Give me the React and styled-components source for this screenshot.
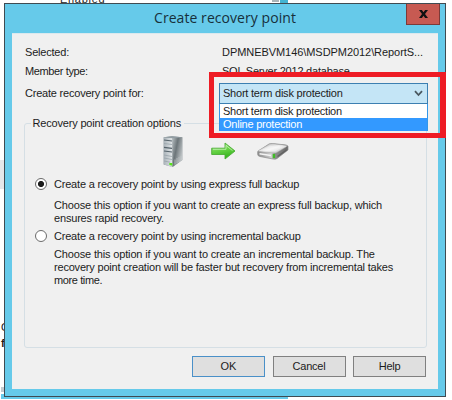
import React from "react";
import styled, { createGlobalStyle } from "styled-components";

const GlobalStyle = createGlobalStyle`
  *, *::before, *::after { box-sizing: border-box; }
  body { margin: 0; background: #fff; }
`;

const Desktop = styled.main`
  position: relative;
  width: 452px;
  height: 400px;
  padding: 3px 0 0 4px;
  overflow: hidden;
  background: #fff;
  font: 11px/13px "Liberation Sans", Arial, sans-serif;
  color: #1c1c1c;
`;

/* Slivers of the window that lies behind the dialog */
const Behind = styled.div`
  position: absolute;
  left: ${(p) => p.$x}px;
  top: ${(p) => p.$y}px;
  width: ${(p) => p.$w}px;
  height: ${(p) => p.$h}px;
  background: ${(p) => p.$bg || "transparent"};
`;
const BehindLabel = styled.span`
  display: block;
  line-height: 13px;
  letter-spacing: ${(p) => p.$ls || 0}px;
  font-weight: ${(p) => p.$weight || 400};
`;

const Dialog = styled.section`
  position: relative;
  display: flex;
  flex-direction: column;
  width: 442px;
  height: 394px;
  padding: 0 7px 7px;
  border: 1px solid #3f4b52;
  background: #66caea;
`;

const TitleBar = styled.header`
  position: relative;
  flex: none;
  height: 29px;
  display: flex;
  justify-content: center;
`;
const Title = styled.h1`
  margin: 0;
  padding-top: 4px;
  font: 400 14px/20px "Open Sans", "Noto Sans", sans-serif;
  letter-spacing: 0.06px;
  color: #17303b;
`;
const CloseButton = styled.button`
  position: absolute;
  right: -2px;
  top: 0;
  width: 34px;
  height: 21px;
  padding: 0;
  display: flex;
  align-items: center;
  justify-content: center;
  border: 1px solid #7c3a38;
  border-top: 0;
  background: #c75a52;
`;

const Client = styled.div`
  flex: 1;
  padding: 12px 11px 0 12px;
  background: #f0f0f0;
  border-top: 1px solid #dbe9ee;
  display: flex;
  flex-direction: column;
`;

const Field = styled.div`
  display: grid;
  grid-template-columns: 197px 1fr;
  height: ${(p) => p.$h}px;
  padding-left: 1px;
`;
const Text = styled.span`
  display: block;
  white-space: nowrap;
  letter-spacing: ${(p) => p.$ls}px;
`;

const Select = styled.div`
  display: flex;
  align-items: center;
  justify-content: space-between;
  width: 209px;
  height: 21px;
  margin: -4px 0 0 -3px;
  padding: 0 4px 0 3px;
  border: 1px solid #3c7fb1;
  background: #c4e5f6;
`;
const Menu = styled.ul`
  position: absolute;
  left: 214px;
  top: 100px;
  width: 209px;
  height: 27px;
  margin: 0;
  padding: 1px 0 0;
  list-style: none;
  border: solid #3397e8;
  border-width: 0 1px;
  background: #fff;
`;
const Option = styled.li`
  height: 13px;
  padding-left: 3px;
  background: ${(p) => (p.$active ? "#3399ff" : "#fff")};
  color: ${(p) => (p.$active ? "#fff" : "#1c1c1c")};
`;
const Highlight = styled.div`
  position: absolute;
  left: 204px;
  top: 68px;
  width: 237px;
  height: 66px;
  border: 5px solid #ee1c25;
  border-right-width: 6px;
`;

const Group = styled.fieldset`
  height: 231px;
  min-width: 0;
  margin: 0;
  padding: 0 10px;
  border: 1px solid #d5dfe5;
  border-radius: 3px;
`;
const Legend = styled.legend`
  margin-left: -4.5px;
  padding: 0 3px 0 2px;
  letter-spacing: -0.18px;
`;
const Icons = styled.div`
  display: flex;
  height: 48px;
  padding-left: 128px;
  align-items: flex-start;
`;
const ServerIcon = styled.svg`
  flex: none;
  margin-top: 6px;
`;
const ArrowIcon = styled.svg`
  flex: none;
  margin: 12px 0 0 27px;
`;
const DriveIcon = styled.svg`
  flex: none;
  margin: 13px 0 0 21px;
`;

const Choice = styled.label`
  display: flex;
  align-items: flex-start;
  height: ${(p) => p.$h}px;
`;
const Radio = styled.span`
  flex: none;
  width: 12px;
  height: 12px;
  margin: -0.5px 7px 0 0;
  border: 1px solid #6b6b6b;
  border-radius: 50%;
  background: ${(p) => (p.$on ? "radial-gradient(circle, #1d1d1d 0 2.7px, #fff 3.4px)" : "#fff")};
`;
const Description = styled.div`
  height: ${(p) => p.$h}px;
  padding-left: 19px;
`;

const Footer = styled.footer`
  display: flex;
  justify-content: flex-end;
  gap: 7.5px;
  margin-top: 8px;
  padding-right: 1px;
`;
const Button = styled.button`
  width: 73px;
  height: 21px;
  padding: 0;
  border: 1px solid ${(p) => (p.$primary ? "#4a90c8" : "#808080")};
  background: #dfdfdf;
  font: inherit;
  letter-spacing: ${(p) => p.$ls}px;
  color: #1c1c1c;
`;

const Server = () => (
  <ServerIcon width="21" height="32" viewBox="0 0 21 32">
    <defs>
      <linearGradient id="srvSide" x1="0" y1="0" x2="1" y2="0.6">
        <stop offset="0" stopColor="#b4bcbf" />
        <stop offset="0.45" stopColor="#6c7579" />
        <stop offset="1" stopColor="#c3c8ca" />
      </linearGradient>
      <linearGradient id="srvFront" x1="0" y1="0" x2="1" y2="0">
        <stop offset="0" stopColor="#aab3b9" />
        <stop offset="1" stopColor="#e4e8ea" />
      </linearGradient>
    </defs>
    <path d="M.7 1.200 9 .3 19.300 1.200V24L9.500 31 .7 28.500z" fill="#8a9499" />
    <path d="M.7 1.300 9.500 2V31L.7 28.500z" fill="url(#srvFront)" />
    <path d="M9.500 2 19.300 1.200V24L9.500 31z" fill="url(#srvSide)" />
    <path d="M.7 1.200 9 .3 19.300 1.200 9.500 2.200z" fill="#929da3" />
    <path d="M1 4 9 5M1 11.300 9 12.300M1 15 9 16" stroke="#56636b" strokeWidth="1.200" />
    <path d="M1 7.500 9 8.500M1 19 9 20.500M1 22 9 23.500M1 25 7 26.200" stroke="#98a3a9" strokeWidth=".8" />
    <path d="M6.300 27h3v2.800L6.300 29z" fill="#58e31b" />
    <path d="M12 23.500v5M14 22v5M16 21v5M18 20v4" stroke="#c3c8ca" strokeWidth=".7" />
  </ServerIcon>
);

const Arrow = () => (
  <ArrowIcon width="25" height="19" viewBox="0 0 25 19">
    <defs>
      <linearGradient id="arrowFill" x1="0" y1="0" x2="0.300" y2="1">
        <stop offset="0" stopColor="#b5eba0" />
        <stop offset="0.500" stopColor="#69d447" />
        <stop offset="1" stopColor="#35b51c" />
      </linearGradient>
    </defs>
    <path d="M.7 6.200H14V1L24 9 14 17V12.500H.7z" fill="url(#arrowFill)" stroke="#4cae35" strokeWidth=".9" strokeLinejoin="round" />
    <path d="M2 7.300H15V3.400L21.500 8.600" fill="none" stroke="#c5f2b5" strokeWidth=".8" />
  </ArrowIcon>
);

const Drive = () => (
  <DriveIcon width="32" height="18" viewBox="0 0 32 18">
    <defs>
      <linearGradient id="driveTop" x1="0" y1="0" x2="1" y2="1">
        <stop offset="0" stopColor="#b8b8b8" />
        <stop offset="0.500" stopColor="#f2f2f2" />
        <stop offset="1" stopColor="#b4b4b4" />
      </linearGradient>
      <linearGradient id="driveFront" x1="0" y1="0" x2="1" y2="0">
        <stop offset="0" stopColor="#8c8c8c" />
        <stop offset="0.450" stopColor="#d0d0d0" />
        <stop offset="0.600" stopColor="#8a8a8a" />
        <stop offset="1" stopColor="#6a6a6a" />
      </linearGradient>
    </defs>
    <path d="M.7 8.500 12 1Q13 .5 15 .5L29 2Q31 2.500 31 3.500V7L20 15.500Q19 16.500 16 16L3 13.500Q.7 13 .7 11.500z" fill="url(#driveFront)" stroke="#8a8a8a" strokeWidth=".7" />
    <path d="M1.500 7.500 12.500 1.200Q14 .7 16 .8L29.500 2.500Q30.500 3 29 4L19.500 9.700Q18.500 10.200 17 10L3 8.500Q1 8.300 1.500 7.500z" fill="url(#driveTop)" stroke="#a2a2a2" strokeWidth=".5" />
    <path d="M5 7 13 2.700 26 4 18 8.600z" fill="#fff" opacity=".4" />
    <path d="M2.500 10.700 14 12.500" stroke="#f3f3f3" strokeWidth="1.500" />
    <path d="M15.700 11 18.200 10.700V15L15.700 15.300z" fill="#3fbb24" />
    <path d="M20.500 13.500 29.500 7" stroke="#626262" strokeWidth="1.500" />
  </DriveIcon>
);

export default function App() {
  return (
    <>
      <GlobalStyle />
      <Desktop>
        <Behind $x={60} $y={-7} $w={48} $h={13}><BehindLabel $ls={0.7}>Enabled</BehindLabel></Behind>
        <Behind $x={272} $y={0} $w={7} $h={2} $bg="#a9b4b8" />
        <Behind $x={280} $y={0} $w={8} $h={3} $bg="#43b4d2" />
        <Behind $x={0} $y={160} $w={4} $h={29} $bg="#e4e7ea" />
        <Behind $x={1} $y={321} $w={10} $h={13}><BehindLabel>O</BehindLabel></Behind>
        <Behind $x={1} $y={337} $w={10} $h={13}><BehindLabel $weight={700}>f</BehindLabel></Behind>
        <Behind $x={1} $y={387} $w={3} $h={5} $bg="#c5ccd0" />
        <Behind $x={1} $y={394} $w={287} $h={5} $bg="#66caea" />

        <Dialog>
          <TitleBar>
            <Title>Create recovery point</Title>
            <CloseButton aria-label="Close">
              <svg width="9" height="8" viewBox="0 0 9 8">
                <path d="M0 0h2.900L4.500 2.300 6.100 0H9L6 4 9 8H6.100L4.500 5.700 2.900 8H0L3 4z" fill="#111" />
              </svg>
            </CloseButton>
          </TitleBar>

          <Client>
            <Field $h={19}>
              <Text $ls={-0.2}>Selected:</Text>
              <Text $ls={-0.06}>DPMNEBVM146\MSDPM2012\ReportS...</Text>
            </Field>
            <Field $h={22}>
              <Text $ls={-0.38}>Member type:</Text>
              <Text $ls={-0.22}>SQL Server 2012 database</Text>
            </Field>
            <Field $h={30}>
              <Text $ls={-0.21}>Create recovery point for:</Text>
              <Select>
                <Text $ls={-0.22}>Short term disk protection</Text>
                <svg width="9" height="7" viewBox="0 0 9 7">
                  <path d="M1 1.200 4.500 5 8 1.200" fill="none" stroke="#4a5860" strokeWidth="1.800" />
                </svg>
              </Select>
            </Field>

            <Group>
              <Legend>Recovery point creation options</Legend>
              <Icons>
                <Server />
                <Arrow />
                <Drive />
              </Icons>
              <Choice $h={21}>
                <Radio $on />
                <Text $ls={-0.2}>Create a recovery point by using express full backup</Text>
              </Choice>
              <Description $h={31}>
                <Text $ls={-0.162}>Choose this option if you want to create an express full backup, which</Text>
                <Text $ls={-0.18}>ensures rapid recovery.</Text>
              </Description>
              <Choice $h={18}>
                <Radio />
                <Text $ls={-0.2}>Create a recovery point by using incremental backup</Text>
              </Choice>
              <Description $h={40}>
                <Text $ls={-0.155}>Choose this option if you want to create an incremental backup. The</Text>
                <Text $ls={-0.194}>recovery point creation will be faster but recovery from incremental takes</Text>
                <Text $ls={-0.39}>more time.</Text>
              </Description>
            </Group>

            <Footer>
              <Button $primary $ls={0}>OK</Button>
              <Button $ls={-0.2}>Cancel</Button>
              <Button $ls={-0.28}>Help</Button>
            </Footer>
          </Client>

          <Menu>
            <Option><Text $ls={-0.25}>Short term disk protection</Text></Option>
            <Option $active><Text $ls={-0.24}>Online protection</Text></Option>
          </Menu>
          <Highlight />
        </Dialog>
      </Desktop>
    </>
  );
}
